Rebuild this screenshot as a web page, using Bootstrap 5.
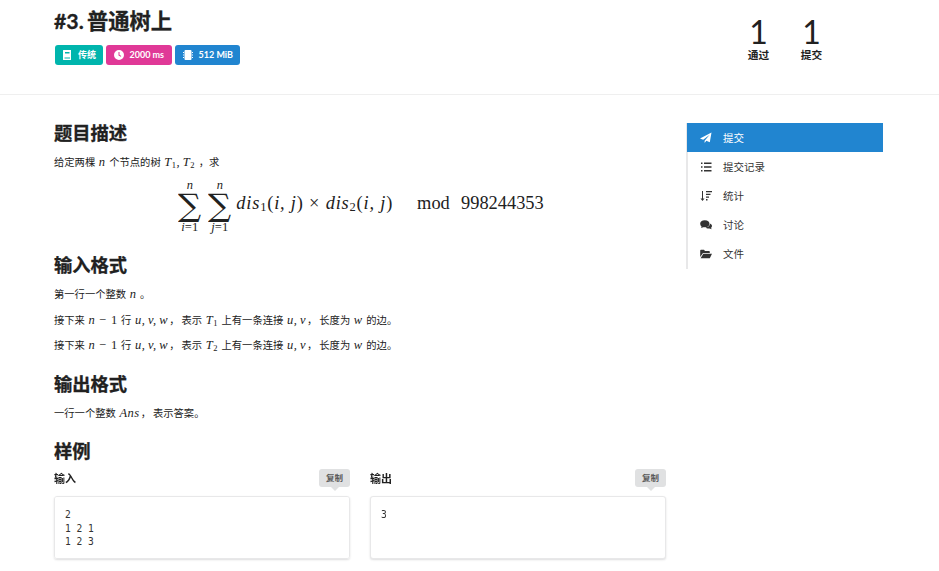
<!DOCTYPE html>
<html lang="zh">
<head>
<meta charset="utf-8">
<title>#3. 普通树上</title>
<link href="https://cdn.jsdelivr.net/npm/bootstrap@5.3.0/dist/css/bootstrap.min.css" rel="stylesheet">
<style>
html,body{height:571px;overflow:hidden;}
body{font-family:Lato,"Noto Sans CJK SC",sans-serif;font-size:10px;line-height:1.4;color:#212121;background:#fff;}
.hdr{height:95px;border-bottom:1px solid #efefef;padding-left:54px;}
.hdr-left{width:640px;}
.ptitle{font-size:21.3px;font-weight:700;line-height:26px;margin:8px 0 0;color:#212121;word-spacing:-2px;-webkit-text-stroke:.3px #212121;}
.tags{gap:2.500px;margin-top:11px;margin-left:1px;}
.tagx{height:20px;border-radius:3px;color:#fff;font-size:9px;font-weight:700;display:flex;align-items:center;padding:0 8px;gap:6px;white-space:nowrap;}
.t-teal{background:#00b5ad;padding:0 7px 0 7px;}
.t-pink{background:#e03997;}
.t-blue{background:#2185d0;padding-right:7px;}
.stats{margin-left:38px;margin-top:16px;}
.statx{width:53px;text-align:center;}
.statnum{font-size:32px;line-height:32px;font-weight:400;color:#212121;}
.statlab{font-size:10.7px;font-weight:700;line-height:14px;}
.bodyrow{padding-left:54px;}
.maincol{width:612px;padding-top:27px;}
.sect{font-size:18.3px;font-weight:700;line-height:23px;margin:0;color:#212121;-webkit-text-stroke:.3px #212121;}
.para{font-size:10.3px;line-height:14px;margin:0;color:#212121;}
.mi{font-family:"Liberation Serif",serif;font-style:italic;font-size:12.5px;letter-spacing:.5px;word-spacing:-1px;margin:0 1px;}
.mr{font-family:"Liberation Serif",serif;font-style:normal;font-size:12.5px;letter-spacing:1px;}
.mi sub{font-size:8.5px;font-style:normal;bottom:-.25em;}
.cm{margin-right:2px;}
.display{height:75px;margin-top:1px;padding-bottom:4px;font-family:"Liberation Serif",serif;font-size:18.4px;color:#212121;}
.bigsum{display:inline-flex;flex-direction:column;align-items:center;width:27px;margin-right:3px;}
.bigsum .lim{font-size:12.5px;line-height:12px;font-style:italic;white-space:nowrap;}
.bigsum .sg{font-size:27px;line-height:30px;height:30px;font-family:"DejaVu Serif",serif;display:block;transform:scale(1.2,1.15);}
.dmath{font-style:italic;letter-spacing:.8px;margin-bottom:4px;}
.dmath sub{font-size:12.5px;font-style:normal;bottom:-.2em;}
.modp{margin-bottom:4px;word-spacing:1px;}
.up{font-style:normal;}
.samplecol{width:296px;}
.samplegap{gap:20px;margin-top:2px;}
.samplehead{height:31px;}
.samplelab{font-size:11px;font-weight:700;line-height:14px;margin-top:7px;}
.copybtn{position:relative;background:#e0e1e2;color:#5a5a5a;font-size:8.5px;font-weight:700;border-radius:3px;width:31px;height:18px;text-align:center;line-height:18px;margin-top:4px;}
.copybtn::after{content:"";position:absolute;left:50%;margin-left:-4px;bottom:-4px;border-left:4px solid transparent;border-right:4px solid transparent;border-top:4px solid #e0e1e2;}
.samplebox{height:63px;background:#fff;border:1px solid #e8e8e9;border-radius:3px;box-shadow:0 1px 2px rgba(34,36,38,.15);padding:11px 10px;font-family:"DejaVu Sans Mono","Liberation Mono",monospace;font-size:9.6px;line-height:13.7px;color:#333;white-space:pre;margin:0;}
.sidecol{width:197px;margin-left:20px;margin-top:28px;height:146px;border-left:2px solid #e8e8e9;}
.sideitem{height:29px;display:flex;align-items:center;padding:1px 0 0 12px;gap:11px;font-size:10.5px;color:#333;}
.sideitem svg{flex:none;width:12px;height:12px;fill:#333;}
.sideitem.on{background:#2185d0;color:#fff;margin-left:-1px;padding-left:13px;}
.sideitem.on svg{fill:#fff;}
.tagx svg{width:10px;height:10px;fill:#fff;flex:none;}
</style>
</head>
<body>
<div class="hdr d-flex">
  <div class="hdr-left">
    <h1 class="ptitle">#3. 普通树上</h1>
    <div class="tags d-flex">
      <span class="tagx t-teal"><svg viewBox="0 0 10 10"><path d="M1.500 0H9v10H1.500A.5.5 0 0 1 1 9.500V.5A.5.500 0 0 1 1.500 0zM3 2v1.500h4.500V2zM2.500 7.500V8.500h5.500v-1z" fill-rule="evenodd"/></svg><span>传统</span></span>
      <span class="tagx t-pink"><svg viewBox="0 0 10 10"><path d="M5 0a5 5 0 1 0 0 10A5 5 0 0 0 5 0zM4.500 2h1v2.800l1.800 1.100-.5.800L4.500 5.400z" fill-rule="evenodd"/></svg><span>2000 ms</span></span>
      <span class="tagx t-blue"><svg viewBox="0 0 10 10"><path d="M2.500 0h5A1 1 0 0 1 8.500 1V9a1 1 0 0 1-1 1h-5a1 1 0 0 1-1-1V1a1 1 0 0 1 1-1zM0 2h1v1H0zM0 4.500h1v1H0zM0 7h1v1H0zM9 2h1v1H9zM9 4.500h1v1H9zM9 7h1v1H9z"/></svg><span>512 MiB</span></span>
    </div>
  </div>
  <div class="stats d-flex">
    <div class="statx"><div class="statnum">1</div><div class="statlab">通过</div></div>
    <div class="statx"><div class="statnum">1</div><div class="statlab">提交</div></div>
  </div>
</div>
<div class="bodyrow d-flex">
  <div class="maincol">
    <h4 class="sect">题目描述</h4>
    <p class="para" style="margin-top:10px">给定两棵 <span class="mi">n</span> 个节点的树 <span class="mi">T<sub>1</sub>, T<sub>2</sub></span> ，求</p>
    <div class="display d-flex justify-content-center align-items-center">
      <span class="bigsum"><span class="lim">n</span><span class="sg">∑</span><span class="lim">i<span class="up">=1</span></span></span>
      <span class="bigsum"><span class="lim">n</span><span class="sg">∑</span><span class="lim">j<span class="up">=1</span></span></span>
      <span class="dmath">dis<sub>1</sub><span class="up">(</span>i, j<span class="up">)</span> <span class="up">×</span> dis<sub>2</sub><span class="up">(</span>i, j<span class="up">)</span></span>
      <span class="up modp ms-4">mod&nbsp;&nbsp;998244353</span>
    </div>
    <h4 class="sect" style="margin-top:9px">输入格式</h4>
    <p class="para" style="margin-top:10px">第一行一个整数 <span class="mi">n</span> 。</p>
    <p class="para" style="margin-top:11.500px">接下来 <span class="mi">n</span> <span class="mr">− 1</span> 行 <span class="mi">u, v, w</span><span class="cm">，</span>表示 <span class="mi">T<sub>1</sub></span> 上有一条连接 <span class="mi">u, v</span><span class="cm">，</span>长度为 <span class="mi">w</span> 的边。</p>
    <p class="para" style="margin-top:11.500px">接下来 <span class="mi">n</span> <span class="mr">− 1</span> 行 <span class="mi">u, v, w</span><span class="cm">，</span>表示 <span class="mi">T<sub>2</sub></span> 上有一条连接 <span class="mi">u, v</span><span class="cm">，</span>长度为 <span class="mi">w</span> 的边。</p>
    <h4 class="sect" style="margin-top:21px">输出格式</h4>
    <p class="para" style="margin-top:10px">一行一个整数 <span class="mi">Ans</span><span class="cm">，</span>表示答案。</p>
    <h4 class="sect" style="margin-top:20px">样例</h4>
    <div class="samplegap d-flex">
      <div class="samplecol">
        <div class="samplehead d-flex justify-content-between"><div class="samplelab">输入</div><div class="copybtn">复制</div></div>
        <pre class="samplebox">2
1 2 1
1 2 3</pre>
      </div>
      <div class="samplecol">
        <div class="samplehead d-flex justify-content-between"><div class="samplelab">输出</div><div class="copybtn">复制</div></div>
        <pre class="samplebox">3</pre>
      </div>
    </div>
  </div>
  <div class="sidecol">
    <div class="sideitem on"><svg viewBox="0 0 12 12"><path d="M11.500.5 9.800 10.200 6.300 8.700 4.600 11V8.800L9.700 2.800 3.200 7.800 0 6.500z"/></svg><span>提交</span></div>
    <div class="sideitem"><svg viewBox="0 0 12 12"><path d="M1 1.500h1.500V3H1zM4 1.500h7.500V3H4zM1 5.200h1.500v1.500H1zM4 5.200h7.500v1.500H4zM1 9h1.500v1.500H1zM4 9h7.500v1.500H4z"/></svg><span>提交记录</span></div>
    <div class="sideitem"><svg viewBox="0 0 12 12"><path d="M2 1h1v7.500h1.500L2.500 11 .5 8.500H2zM6 1h6v1.300H6zM6 3.700h4.500V5H6zM6 6.400h3V7.700H6zM6 9.100h1.500v1.300H6z"/></svg><span>统计</span></div>
    <div class="sideitem"><svg viewBox="0 0 12 12"><ellipse cx="4.800" cy="4.700" rx="4.600" ry="3.500"/><path d="M2 7l-1 2 3-1zM9.800 4.500C11.200 5 12 6 12 7c0 .8-.5 1.500-1 1.900l.8 1.400-2.400-.9c-1.500.3-3-.1-3.800-1 2.500-.1 4.500-1.700 4.200-3.900z"/></svg><span>讨论</span></div>
    <div class="sideitem"><svg viewBox="0 0 12 12"><path d="M.2 2.500A.8.800 0 0 1 1 1.800h3l1 1.200h4a.8.8 0 0 1 .8.8V5H3L.2 9zM3.300 5.800H12L9.800 10.200H.6z"/></svg><span>文件</span></div>
  </div>
</div>
</body>
</html>
